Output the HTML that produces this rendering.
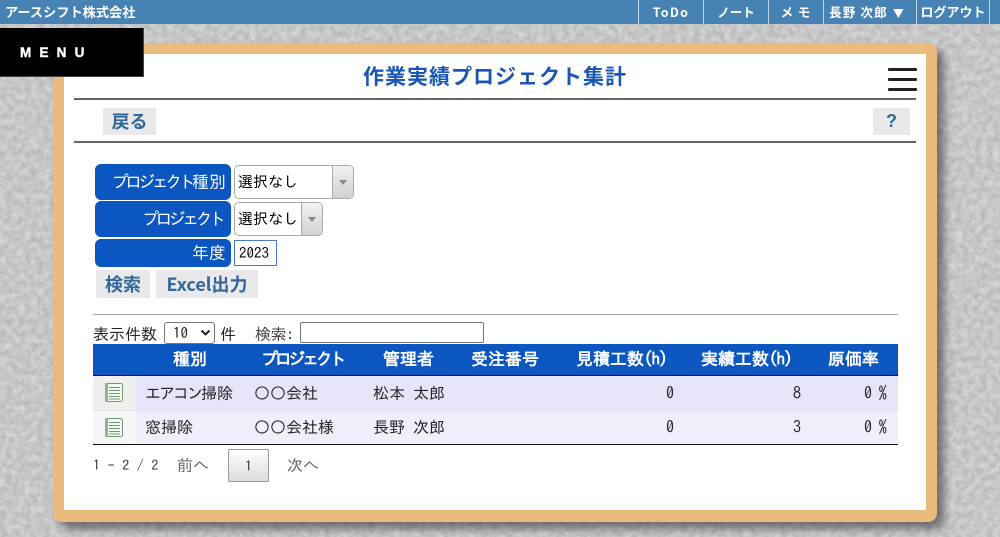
<!DOCTYPE html>
<html lang="ja"><head><meta charset="utf-8"><title>作業実績プロジェクト集計</title>
<style>
html,body{margin:0;padding:0;width:1000px;height:537px;overflow:hidden;background:#c9c9c9;}
body{position:relative;font-family:"Liberation Sans","IPAGothic","Noto Sans CJK JP",sans-serif;color:#222;}
.a{position:absolute;white-space:nowrap;}
.g{font-family:"IPAGothic","Noto Sans CJK JP",sans-serif;}
.n{font-family:"Noto Sans CJK JP",sans-serif;}
.nav{position:absolute;top:0;height:24px;line-height:24px;text-align:center;color:#fff;font-size:12.5px;font-weight:bold;border-left:1px solid #c5d6e5;box-sizing:border-box;white-space:nowrap;font-family:"Noto Sans CJK JP",sans-serif;}
.lbl{position:absolute;left:95px;width:136px;background:#0b56c0;border-radius:6px;color:#fff;font-size:17px;text-align:right;box-sizing:border-box;padding-right:5px;font-family:"IPAGothic",sans-serif;}
.k3{letter-spacing:-3.6px;}
.sel{position:absolute;left:234px;height:34px;border:1px solid #aaa;border-radius:5px;background:#fff;box-sizing:border-box;font-size:15px;line-height:32px;padding-left:3px;font-family:"IPAGothic",sans-serif;color:#000;}
.sel i{position:absolute;right:0;top:0;width:20px;height:32px;background:linear-gradient(#f2f2f2,#d2d2d2);border-left:1px solid #aaa;border-radius:0 4px 4px 0;}
.sel i:after{content:"";position:absolute;left:6px;top:14px;border:4px solid transparent;border-top:5px solid #888;border-bottom:0;}
.btn{position:absolute;background:#e9e9ec;color:#336699;font-weight:bold;font-size:18px;text-align:center;font-family:"Noto Sans CJK JP",sans-serif;}
.th{position:absolute;top:344px;height:31px;line-height:31px;color:#fff;font-size:17px;font-weight:bold;white-space:nowrap;font-family:"IPAGothic",sans-serif;}
.th b{letter-spacing:-1px;}
.th .k{letter-spacing:-3.3px;}
.td{position:absolute;font-size:16px;line-height:20px;color:#222;white-space:nowrap;font-family:"IPAGothic",sans-serif;}
.bar{position:absolute;left:888px;width:29px;height:3px;background:#222;border-radius:1px;}
</style></head><body>
<svg class="a" style="left:0;top:0" width="1000" height="537"><filter id="c" x="0" y="0" width="100%" height="100%" color-interpolation-filters="sRGB"><feTurbulence type="fractalNoise" baseFrequency="0.16" numOctaves="5" seed="5"/><feColorMatrix type="matrix" values="0.2 0 0 0 0.68 0.2 0 0 0 0.68 0.2 0 0 0 0.68 0 0 0 0 1"/></filter><rect width="1000" height="537" filter="url(#c)"/></svg>

<div class="a" style="left:0;top:0;width:1000px;height:24px;background:#4682b4;"></div>
<div class="a n" style="left:5px;top:0;line-height:24px;color:#fff;font-size:13.2px;font-weight:bold;">アースシフト株式会社</div>
<div class="nav" style="left:638px;width:65px;letter-spacing:1.3px;">ToDo</div>
<div class="nav" style="left:703px;width:65px;">ノート</div>
<div class="nav" style="left:768px;width:55px;letter-spacing:1px;">メ モ</div>
<div class="nav" style="left:823px;width:93px;text-align:left;padding-left:5px;letter-spacing:1.2px;">長野 次郎 <span style="font-size:11px;position:relative;left:1px;">▼</span></div>
<div class="nav" style="left:916px;width:74px;border-right:1px solid #c5d6e5;font-size:13px;">ログアウト</div>

<div class="a" style="left:53px;top:43px;width:884px;height:479px;background:#e9bc7d;border-radius:9px;box-shadow:7px 7px 9px rgba(50,50,50,.6);"></div>
<div class="a" style="left:64px;top:54px;width:862px;height:456px;background:#fff;"></div>

<div class="a" style="left:0;top:28px;width:144px;height:49px;background:#000;border-right:1px solid #444;border-bottom:1px solid #444;box-sizing:border-box;"></div>
<div class="a" style="left:20px;top:44px;color:#fff;font-size:13.5px;font-weight:bold;letter-spacing:8.2px;line-height:17px;-webkit-text-stroke:.4px #fff;">MENU</div>

<div class="a n" style="left:363px;top:59px;color:#1a56b4;font-size:21px;font-weight:bold;line-height:34px;letter-spacing:1px;">作業実績プロジェクト集計</div>
<div class="bar" style="top:68px;"></div><div class="bar" style="top:78px;"></div><div class="bar" style="top:88px;"></div>
<div class="a" style="left:74px;top:98px;width:842px;height:2px;background:#666;"></div>
<div class="btn" style="left:103px;top:108px;width:53px;height:27px;line-height:27px;">戻る</div>
<div class="btn" style="left:873px;top:108px;width:37px;height:27px;line-height:27px;font-family:'Liberation Sans',sans-serif;font-size:18px;">?</div>
<div class="a" style="left:74px;top:141px;width:842px;height:2px;background:#666;"></div>

<div class="lbl" style="top:164px;height:36px;line-height:37px;"><span class="k3">プロジェクト</span>種別</div>
<div class="sel" style="top:165px;width:120px;">選択なし<i></i></div>
<div class="lbl" style="top:201px;height:36px;line-height:37px;"><span class="k3">プロジェク</span>ト</div>
<div class="sel" style="top:202px;width:89px;">選択なし<i></i></div>
<div class="lbl" style="top:239px;height:28px;line-height:29px;">年度</div>
<div class="a g" style="left:234px;top:240px;width:43px;height:26px;border:1px solid #4a78c8;box-sizing:border-box;font-size:15px;line-height:24px;padding-left:4px;color:#000;">2023</div>
<div class="btn" style="left:96px;top:270px;width:54px;height:28px;line-height:28px;">検索</div>
<div class="btn" style="left:156px;top:270px;width:102px;height:28px;line-height:28px;">Excel出力</div>

<div class="a" style="left:93px;top:314px;width:805px;height:1px;background:#aaa;"></div>
<div class="a g" style="left:93px;top:324px;font-size:16px;line-height:20px;">表示件数</div>
<div class="a g" style="left:164px;top:322px;width:51px;height:22px;border:1px solid #777;border-radius:3px;box-sizing:border-box;font-size:15px;line-height:20px;padding-left:8px;background:#fff;">10
<svg style="position:absolute;left:35px;top:6px" width="11" height="8"><path d="M1.5 1.5L5.5 5.5L9.5 1.5" fill="none" stroke="#222" stroke-width="2"/></svg></div>
<div class="a g" style="left:220px;top:324px;font-size:16px;line-height:20px;">件</div>
<div class="a g" style="left:255px;top:324px;font-size:16px;line-height:20px;color:#444;letter-spacing:-.5px;">検索:</div>
<div class="a" style="left:300px;top:322px;width:184px;height:21px;border:1px solid #777;border-radius:2px;box-sizing:border-box;background:#fff;"></div>

<div class="a" style="left:93px;top:344px;width:805px;height:31px;background:#0b56c0;"></div>
<div class="a" style="left:93px;top:375px;width:805px;height:1px;background:#111;"></div>
<div class="th" style="left:173px;">種別</div>
<div class="th" style="left:261px;"><span class="k">プロジェクト</span></div>
<div class="th" style="left:383px;">管理者</div>
<div class="th" style="left:471px;">受注番号</div>
<div class="th" style="left:576px;">見積工数<b>(h)</b></div>
<div class="th" style="left:701px;">実績工数<b>(h)</b></div>
<div class="th" style="left:828px;">原価率</div>

<div class="a" style="left:93px;top:376px;width:805px;height:34px;background:#e6e4f9;"></div>
<div class="a" style="left:93px;top:410px;width:805px;height:34px;background:#efeefb;border-top:1px solid #e2e2ee;box-sizing:border-box;"></div>
<div class="a" style="left:93px;top:376px;width:43px;height:34px;background:#efefef;"></div>
<div class="a" style="left:93px;top:411px;width:43px;height:33px;background:#f6f6f6;"></div>
<div class="a" style="left:93px;top:444px;width:805px;height:1px;background:#111;"></div>

<svg class="a" style="left:105px;top:383px" width="19" height="20"><rect x=".5" y=".5" width="17" height="18" rx="2" fill="#f4f8f2" stroke="#6f9a7a"/><rect x="0" y="0" width="3" height="19" fill="#8ab494"/><path d="M4 4.5H15M4 7.5H15M4 10.5H15M4 13.5H15M4 16H15" stroke="#6f9a7a" fill="none"/></svg>
<svg class="a" style="left:105px;top:418px" width="19" height="20"><rect x=".5" y=".5" width="17" height="18" rx="2" fill="#f4f8f2" stroke="#6f9a7a"/><rect x="0" y="0" width="3" height="19" fill="#8ab494"/><path d="M4 4.5H15M4 7.5H15M4 10.5H15M4 13.5H15M4 16H15" stroke="#6f9a7a" fill="none"/></svg>

<div class="td" style="left:145px;top:383px;"><span style="letter-spacing:-2px;">エアコン</span>掃除</div>
<div class="td" style="left:254px;top:383px;">○○会社</div>
<div class="td" style="left:373px;top:383px;">松本 太郎</div>
<div class="td" style="left:666px;top:383px;">0</div>
<div class="td" style="left:793px;top:383px;">8</div>
<div class="td" style="left:864px;top:383px;letter-spacing:-.6px;">0 %</div>
<div class="td" style="left:145px;top:417px;">窓掃除</div>
<div class="td" style="left:254px;top:417px;">○○会社様</div>
<div class="td" style="left:373px;top:417px;">長野 次郎</div>
<div class="td" style="left:666px;top:417px;">0</div>
<div class="td" style="left:793px;top:417px;">3</div>
<div class="td" style="left:864px;top:417px;letter-spacing:-.6px;">0 %</div>

<div class="a g" style="left:93px;top:455px;font-size:14px;line-height:20px;letter-spacing:.3px;color:#333;">1 - 2 / 2</div>
<div class="a g" style="left:177px;top:455px;font-size:16px;line-height:20px;color:#666;">前へ</div>
<div class="a g" style="left:228px;top:449px;width:41px;height:33px;border:1px solid #999;border-radius:2px;box-sizing:border-box;background:linear-gradient(#fff,#dcdcdc);text-align:center;line-height:32px;font-size:14px;color:#333;">1</div>
<div class="a g" style="left:287px;top:455px;font-size:16px;line-height:20px;color:#666;">次へ</div>
</body></html>
